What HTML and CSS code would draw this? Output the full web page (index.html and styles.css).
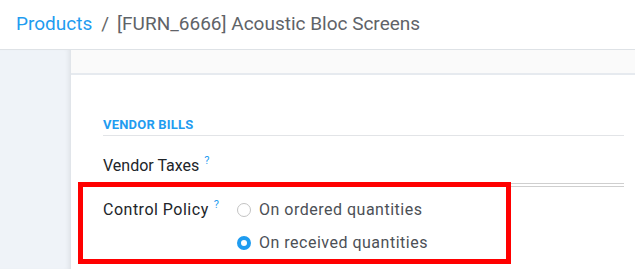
FILE: index.html
```html
<!DOCTYPE html>
<html>
<head>
    <title>Acoustic Bloc Screens</title>
    <meta charset="UTF-8">
    <link rel="stylesheet" href="styles.css">
</head>
<body>
    <div class="header">
        <a href="#" class="crumb">Products</a>
        <span class="sep">/</span>
        <span class="current">[FURN_6666] Acoustic Bloc Screens</span>
    </div>

    <div class="main">
        <div class="gutter"></div>
        <div class="sheet">
            <div class="sheet-band"></div>
            <div class="sheet-body">
                <div class="section-title">Vendor Bills</div>

                <div class="field-row taxes">
                    <div class="label">Vendor Taxes<span class="help">?</span></div>
                    <div class="value"><div class="input-line"></div></div>
                </div>

                <div class="field-row policy">
                    <div class="label">Control Policy<span class="help">?</span></div>
                    <div class="value radios">
                        <label class="radio"><span class="dot"></span>On ordered quantities</label>
                        <label class="radio"><span class="dot checked"></span>On received quantities</label>
                    </div>
                </div>

                <div class="highlight"></div>
            </div>
        </div>
    </div>
</body>
</html>
```

FILE: styles.css
```css
body {
    margin: 0;
    font-family: Roboto, "Noto Sans", sans-serif;
    background: #fff;
    color: #212529;
    overflow: hidden;
    width: 635px;
    height: 269px;
}
.header {
    height: 50px;
    box-sizing: border-box;
    display: flex;
    align-items: center;
    padding: 0 0 3px 16px;
    font-size: 19px;
    border-bottom: 1px solid #dee2e6;
}
.crumb {
    color: #1f9cf0;
    text-decoration: none;
}
.sep {
    color: #666;
    margin: 0 8px 0 9px;
}
.current {
    color: #5f6368;
}
.main {
    display: flex;
    height: 219px;
}
.gutter {
    width: 71px;
    flex: none;
    background: #eff3f8;
    box-shadow: inset -5px 0 5px -3px rgba(0,0,0,0.08);
}
.sheet {
    flex: 1;
    background: #fff;
}
.sheet-band {
    height: 23px;
    background: #fafafa;
    border-bottom: 2px solid #e6eaef;
}
.sheet-body {
    position: relative;
    padding: 42px 11px 0 32px;
}
.section-title {
    font-size: 13px;
    font-weight: bold;
    letter-spacing: 0.2px;
    text-transform: uppercase;
    color: #1f9cf0;
    padding-bottom: 3px;
    border-bottom: 1px solid #e2e4e7;
}
.field-row {
    display: flex;
    font-size: 16px;
    line-height: 24px;
}
.label {
    width: 134px;
    flex: none;
}
.value {
    flex: 1;
}
.help {
    position: relative;
    top: -7px;
    color: #1f9cf0;
    font-size: 11px;
    margin-left: 5px;
}
.taxes {
    margin-top: 18px;
}
.input-line {
    margin-top: 29px;
    height: 4px;
    border-top: 1px solid #cfcfcf;
    border-bottom: 1px solid #cfcfcf;
    box-sizing: border-box;
}
.policy {
    margin-top: 11px;
    letter-spacing: 0.5px;
}
.radios {
    display: flex;
    flex-direction: column;
    gap: 9px;
}
.radio {
    display: flex;
    align-items: center;
    color: #4c5056;
}
.dot {
    width: 14px;
    height: 14px;
    box-sizing: border-box;
    border: 1px solid #c3c3c3;
    border-radius: 50%;
    margin-right: 8px;
    background: #fff;
}
.dot.checked {
    border: 4px solid #1f9cf0;
}
.highlight {
    position: absolute;
    left: 7px;
    top: 107px;
    width: 433px;
    height: 82px;
    border: 5px solid #ff0000;
    box-sizing: border-box;
}
```
